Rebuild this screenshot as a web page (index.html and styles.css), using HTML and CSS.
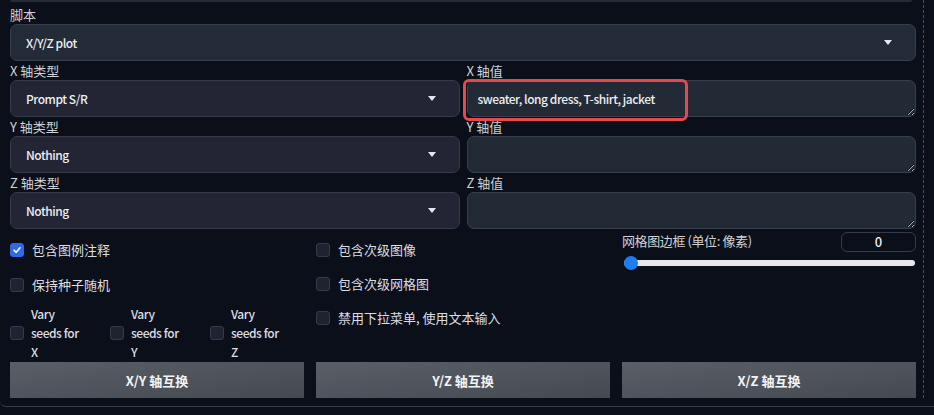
FILE: index.html
```html
<!DOCTYPE html>
<html lang="zh">
<head>
<meta charset="utf-8">
<title>X/Y/Z plot</title>
<link rel="stylesheet" href="styles.css">
</head>
<body>
<div class="frame">
  <div class="panel">
    <div class="top-strip"></div>
    <div class="field">
      <div class="field-label">脚本</div>
      <div class="select">
        <span class="latin">X/Y/Z plot</span>
        <svg class="caret" width="8" height="5" viewBox="0 0 8 5"><path d="M0 0 H8 L4 5 Z" fill="#e5e7eb"/></svg>
      </div>
    </div>

    <div class="axis-grid">
      <div class="field">
        <div class="field-label">X 轴类型</div>
        <div class="select select-alt">
          <span class="latin">Prompt S/R</span>
          <svg class="caret" width="8" height="5" viewBox="0 0 8 5"><path d="M0 0 H8 L4 5 Z" fill="#e5e7eb"/></svg>
        </div>
      </div>
      <div class="field">
        <div class="field-label">X 轴值</div>
        <div class="ta-wrap">
          <textarea class="ta" readonly>sweater, long dress, T-shirt, jacket</textarea>
          <div class="highlight"></div>
        </div>
      </div>

      <div class="field">
        <div class="field-label">Y 轴类型</div>
        <div class="select select-alt">
          <span class="latin">Nothing</span>
          <svg class="caret" width="8" height="5" viewBox="0 0 8 5"><path d="M0 0 H8 L4 5 Z" fill="#e5e7eb"/></svg>
        </div>
      </div>
      <div class="field">
        <div class="field-label">Y 轴值</div>
        <div class="ta-wrap">
          <textarea class="ta" readonly></textarea>
        </div>
      </div>

      <div class="field">
        <div class="field-label">Z 轴类型</div>
        <div class="select select-alt">
          <span class="latin">Nothing</span>
          <svg class="caret" width="8" height="5" viewBox="0 0 8 5"><path d="M0 0 H8 L4 5 Z" fill="#e5e7eb"/></svg>
        </div>
      </div>
      <div class="field">
        <div class="field-label">Z 轴值</div>
        <div class="ta-wrap">
          <textarea class="ta" readonly></textarea>
        </div>
      </div>
    </div>

    <div class="lower">
      <div class="col col-1">
        <label class="check">
          <span class="box box-on"><svg width="10" height="10" viewBox="0 0 10 10"><path d="M2 5.2 L4.2 7.3 L8 2.8" fill="none" stroke="#fff" stroke-width="1.6" stroke-linecap="round" stroke-linejoin="round"/></svg></span>
          <span>包含图例注释</span>
        </label>
        <label class="check">
          <span class="box"></span>
          <span>保持种子随机</span>
        </label>
        <div class="vary-row">
          <label class="vary">
            <span class="box"></span>
            <span class="vary-text">Vary seeds for X</span>
          </label>
          <label class="vary">
            <span class="box"></span>
            <span class="vary-text">Vary seeds for Y</span>
          </label>
          <label class="vary">
            <span class="box"></span>
            <span class="vary-text">Vary seeds for Z</span>
          </label>
        </div>
      </div>

      <div class="col col-2">
        <label class="check">
          <span class="box"></span>
          <span>包含次级图像</span>
        </label>
        <label class="check">
          <span class="box"></span>
          <span>包含次级网格图</span>
        </label>
        <label class="check">
          <span class="box"></span>
          <span>禁用下拉菜单, 使用文本输入</span>
        </label>
      </div>

      <div class="col col-3">
        <div class="slider-head">
          <span class="slider-label">网格图边框 (单位: 像素)</span>
          <span class="num">0</span>
        </div>
        <div class="track">
          <span class="thumb"></span>
        </div>
      </div>
    </div>

    <div class="buttons">
      <button class="btn">X/Y 轴互换</button>
      <button class="btn">Y/Z 轴互换</button>
      <button class="btn">X/Z 轴互换</button>
    </div>
  </div>
</div>
</body>
</html>
```

FILE: styles.css
```css
* { box-sizing: border-box; }

html, body {
  margin: 0;
  padding: 0;
  background: #0b0f19;
}

body {
  font-family: "Noto Sans CJK SC", "Noto Sans", sans-serif;
  font-size: 13px;
  color: #e5e7eb;
  width: 934px;
  height: 415px;
  overflow: hidden;
}

.frame {
  width: 934px;
  padding-bottom: 8px;
  border-bottom: 1px solid #3a3f4b;
  border-bottom-left-radius: 6px;
}

.panel {
  width: 924px;
  height: 398px;
  padding: 0 7px 0 10px;
  border-right: 1px dashed #4a5060;
  display: flex;
  flex-direction: column;
}

.top-strip {
  height: 2px;
  margin-right: 4px;
  background: #262b37;
  border-radius: 0 0 3px 3px;
  margin-bottom: 3px;
}

.field-label {
  font-size: 13px;
  line-height: 19px;
  color: #cfd1d6;
}

.latin {
  font-size: 12px;
  letter-spacing: -0.45px;
}

.select {
  height: 37px;
  background: #232a38;
  border: 1px solid #363d4c;
  border-radius: 7px;
  padding: 0 23px 0 15px;
  display: flex;
  align-items: center;
  justify-content: space-between;
  font-weight: 500;
  color: #eceef1;
}

.select-alt {
  background: #232534;
  border-color: #363a4b;
}

.caret { display: block; }

.axis-grid {
  display: grid;
  grid-template-columns: minmax(0, 1fr) minmax(0, 1fr);
  column-gap: 7px;
}

.ta-wrap {
  position: relative;
  height: 37px;
}

.ta {
  display: block;
  width: 100%;
  height: 37px;
  margin: 0;
  background: #222a36;
  border: 1px solid #373f4e;
  border-radius: 7px;
  padding: 8px 10px;
  font-family: "Noto Sans CJK SC", "Noto Sans", sans-serif;
  font-size: 12px;
  letter-spacing: -0.45px;
  font-weight: 500;
  line-height: 19px;
  color: #eceef1;
  resize: vertical;
  outline: none;
  color-scheme: dark;
  overflow: hidden;
}

.highlight {
  position: absolute;
  left: -4px;
  top: -1px;
  width: 225px;
  height: 42px;
  border: 3px solid #e5484d;
  border-radius: 6px;
  pointer-events: none;
}

.lower {
  display: grid;
  grid-template-columns: repeat(3, minmax(0, 1fr));
  column-gap: 12px;
}

.col {
  display: flex;
  flex-direction: column;
  min-width: 0;
}

.col-1 { padding-top: 11px; }
.col-2 { padding-top: 11px; gap: 15px; }
.col-1 .check + .check { margin-top: 16px; }

.check {
  display: flex;
  align-items: center;
  gap: 8px;
  line-height: 19px;
  color: #dcdee3;
}

.box {
  width: 14px;
  height: 14px;
  flex: 0 0 14px;
  border-radius: 3px;
  background: #1f2331;
  border: 1px solid #363b4b;
  display: flex;
  align-items: center;
  justify-content: center;
}

.box-on {
  background: #2d6ae8;
  border-color: #2d6ae8;
}

.vary-row {
  display: flex;
  margin-top: 10px;
}

.vary {
  flex: 0 0 100px;
  display: flex;
  align-items: center;
  gap: 7px;
  color: #dcdee3;
}

.vary-text {
  width: 52px;
  line-height: 19px;
  font-size: 12px;
  letter-spacing: -0.45px;
  font-weight: 500;
}

.col-3 { padding-top: 3px; }

.slider-head {
  display: flex;
  justify-content: space-between;
  align-items: center;
}

.slider-label {
  color: #cfd1d6;
  line-height: 19px;
  margin-top: -4px;
  letter-spacing: -0.4px;
}

.num {
  width: 75px;
  height: 20px;
  border: 1px solid #363b4b;
  border-radius: 6px;
  text-align: center;
  line-height: 18px;
  font-weight: 500;
  color: #eceef1;
}

.track {
  position: relative;
  margin: 8px 1px 0 2px;
  height: 6px;
  border-radius: 3px;
  background: #e5e7eb;
}

.thumb {
  position: absolute;
  left: 0;
  top: -4px;
  width: 14px;
  height: 14px;
  border-radius: 50%;
  background: #1c7cf4;
}

.buttons {
  display: grid;
  grid-template-columns: repeat(3, minmax(0, 1fr));
  column-gap: 12px;
  margin-top: auto;
}

.btn {
  height: 36px;
  border: none;
  border-radius: 0;
  background: linear-gradient(to bottom right, #5a5e67, #454950);
  color: #f3f4f6;
  font-family: "Noto Sans CJK SC", "Noto Sans", sans-serif;
  font-size: 13px;
  font-weight: 700;
  padding: 0;
}
```
